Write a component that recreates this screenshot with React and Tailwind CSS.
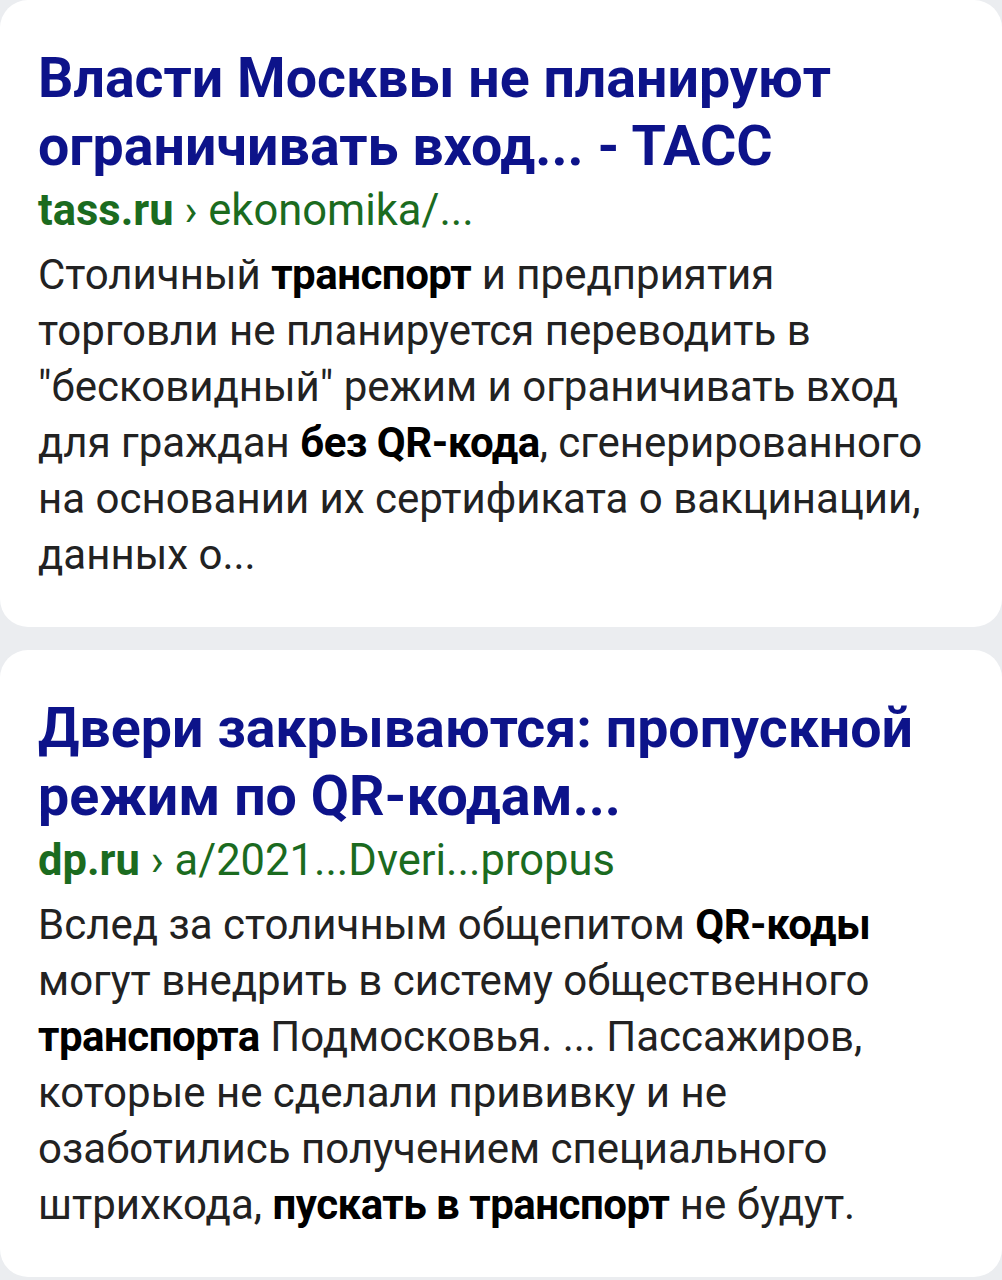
import React from "react";

const results = [
  {
    title: "Власти Москвы не планируют ограничивать вход... - ТАСС",
    domain: "tass.ru",
    path: "ekonomika/...",
    body: [
      ["Столичный ", false],
      ["транспорт", true],
      [" и предприятия торговли не планируется переводить в \"бесковидный\" режим и ограничивать вход для граждан ", false],
      ["без QR-кода", true],
      [", сгенерированного на основании их сертификата о вакцинации, данных о...", false],
    ],
  },
  {
    title: "Двери закрываются: пропускной режим по QR-кодам...",
    domain: "dp.ru",
    path: "a/2021...Dveri...propus",
    body: [
      ["Вслед за столичным общепитом ", false],
      ["QR-коды", true],
      [" могут внедрить в систему общественного ", false],
      ["транспорта", true],
      [" Подмосковья. ... Пассажиров, которые не сделали прививку и не озаботились получением специального штрихкода, ", false],
      ["пускать в транспорт", true],
      [" не будут.", false],
    ],
  },
];

function ResultCard({ item }) {
  return (
    <div className="bg-white rounded-[28px] pl-[38px] pr-[64px] pt-[45px] pb-[44px]">
      <h3 className="text-[55.5px] leading-[68px] font-bold text-[#0d138a]">
        {item.title}
      </h3>
      <div className="mt-[6px] text-[43.5px] leading-[48px] text-[#1b6b1f]">
        <span className="font-bold">{item.domain}</span>
        <span> › {item.path}</span>
      </div>
      <p className="mt-[12px] text-[42px] leading-[56px] text-[#222222]">
        {item.body.map(([text, bold], i) =>
          bold ? (
            <b key={i} className="font-bold text-black tracking-[-0.5px]">
              {text}
            </b>
          ) : (
            <span key={i}>{text}</span>
          )
        )}
      </p>
    </div>
  );
}

export default function App() {
  return (
    <div
      className="w-[1002px] h-[1280px] bg-[#ebedf0] flex flex-col gap-[23px] overflow-hidden"
      style={{ fontFamily: "Roboto, 'Noto Sans', sans-serif" }}
    >
      {results.map((item, i) => (
        <ResultCard key={i} item={item} />
      ))}
    </div>
  );
}
